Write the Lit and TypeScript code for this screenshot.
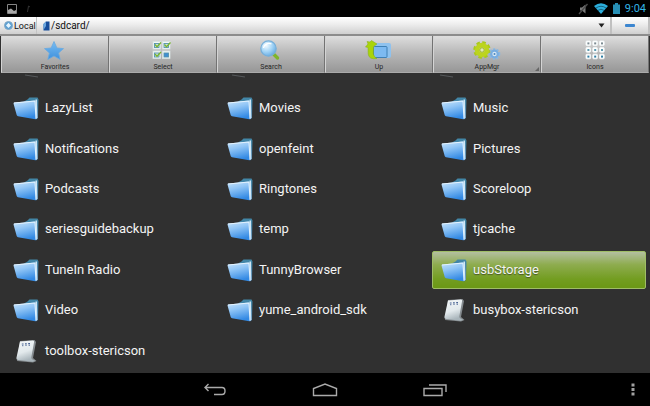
import { LitElement, html, svg, css } from "lit";
import { customElement } from "lit/decorators.js";
import { classMap } from "lit/directives/class-map.js";

interface Entry {
  name: string;
  kind: "folder" | "file";
  selected?: boolean;
}

const folder = (name: string, selected = false): Entry => ({ name, kind: "folder", selected });
const file = (name: string): Entry => ({ name, kind: "file" });

const ENTRIES: Entry[] = [
  folder("LazyList"), folder("Movies"), folder("Music"),
  folder("Notifications"), folder("openfeint"), folder("Pictures"),
  folder("Podcasts"), folder("Ringtones"), folder("Scoreloop"),
  folder("seriesguidebackup"), folder("temp"), folder("tjcache"),
  folder("TuneIn Radio"), folder("TunnyBrowser"), folder("usbStorage", true),
  folder("Video"), folder("yume_android_sdk"), file("busybox-stericson"),
  file("toolbox-stericson"),
];

const folderIcon = html`<svg class="icon" viewBox="0 0 26 26" aria-hidden="true">
  <defs>
    <linearGradient id="front" x1="0.1" y1="0" x2="0.4" y2="1">
      <stop offset="0" stop-color="#c6e3fb" /><stop offset="0.400" stop-color="#90c5f6" /><stop offset="1" stop-color="#3289e4" />
    </linearGradient>
    <linearGradient id="back" x1="0" y1="0" x2="0" y2="1">
      <stop offset="0" stop-color="#4388a8" /><stop offset="1" stop-color="#2a6596" />
    </linearGradient>
  </defs>
  <path d="M11 6.500L14.500 4.500L16.500 2.500L24.500 2.500L25.500 4.500L25 23L23 24.500Z" fill="url(#back)" />
  <path d="M22.500 4.500L24 4.500L24.500 23L22.500 24Z" fill="#cfe6f5" />
  <path d="M0.500 8.500Q0.500 7.500 1.500 7.400L21.300 5.500Q22.300 5.500 22.500 6.500L23.300 23Q23.300 24.400 22.300 24.200L5 21.200Q4 21 3.700 20Z" fill="url(#front)" />
  <path d="M1 8L22 6L23 23.800" fill="none" stroke="#e2f2fe" stroke-width="1.100" />
</svg>`;

const fileIcon = html`<svg class="icon" viewBox="0 0 26 26" aria-hidden="true">
  <defs>
    <linearGradient id="paper" x1="0" y1="0" x2="0.300" y2="1">
      <stop offset="0" stop-color="#f4f7f8" /><stop offset="0.600" stop-color="#e2e9ec" /><stop offset="1" stop-color="#a9b5bb" />
    </linearGradient>
  </defs>
  <path d="M7 3L21.500 2L23 4L20 20L23.500 23L20 24.500L4 23Z" fill="#858b8f" />
  <path d="M7 3.500L20 2.500Q21.300 2.500 21.100 4L18.300 19.500Q18.500 22 22.500 22.700L19.500 23.800L5 22Q3 21.700 3.400 20Z" fill="url(#paper)" />
  <path d="M8.800 6h1.800M12 5.800h1.800M15.200 5.600h1.800M9.300 7.700h1M12.500 7.500h1M15.700 7.300h1" stroke="#4a6494" stroke-width="1.200" />
</svg>`;

const starIcon = svg`<defs><linearGradient id="star" x1="0" y1="0" x2="0" y2="1"><stop offset="0" stop-color="#78bdf3"/><stop offset="1" stop-color="#3e90dc"/></linearGradient></defs>
  <path d="M13 1.500L15.900 8L22.500 8.600L17.600 13L19.200 19.500L13 16L6.800 19.500L8.400 13L3.500 8.600L10.100 8Z" fill="url(#star)" stroke="#6aa9e0" stroke-width="0.800" stroke-linejoin="round"/>`;

const tile = (x: number, y: number, full: boolean) => svg`
  <rect x=${x} y=${y} width="7.500" height="7.500" fill="#f2f8f6" stroke="#d8e2e2" stroke-width="0.800"/>
  <rect x=${x + 1.5} y=${y + 2} width="4.500" height="4" fill=${full ? "#3f8fd2" : "#c9dfe8"} stroke="#5693ad" stroke-width="0.900"/>
  ${full ? "" : svg`<path d="M${x + 2} ${y + 3}l2 2.200l4 -4.200" fill="none" stroke="#78b52c" stroke-width="1.300"/>`}`;

const selectIcon = svg`${tile(4, 1.5, false)}${tile(13.5, 1.5, false)}${tile(4, 11, false)}${tile(13.5, 11, true)}`;

const searchIcon = svg`<defs><radialGradient id="lens" cx="0.35" cy="0.3" r="0.8"><stop offset="0" stop-color="#f3fbff"/><stop offset="0.5" stop-color="#a5d5f6"/><stop offset="1" stop-color="#5aa3df"/></radialGradient></defs>
  <path d="M15.500 13L20.500 18" stroke="#7fb52b" stroke-width="3.400" stroke-linecap="round"/>
  <circle cx="11.500" cy="8.500" r="7.700" fill="url(#lens)" stroke="#77afd9" stroke-width="1.200"/>
  <path d="M6.500 8a5.500 5 0 0 1 8 -4" fill="none" stroke="#fff" stroke-width="1.300"/>`;

const upIcon = svg`<rect x="10" y="3" width="16" height="15" rx="2" fill="#8fc2ee"/>
  <rect x="8.500" y="6.500" width="13.500" height="11" rx="1" fill="#7dbaf1" stroke="#3678ae" stroke-width="0.900"/>
  <path d="M6.500 0.500L12 4L8.500 6.500L8.300 14Q9 17 12 18.500Q4 20 3.200 14L3 7.500L0.500 7L3 4L2 1.500L5 2Z" fill="#a9d40a" stroke="#84ad16" stroke-width="0.500"/>`;

const appIcon = svg`<circle cx="9" cy="10" r="7" fill="none" stroke="#a9c91c" stroke-width="3.500" stroke-dasharray="3.300 2.200"/>
  <circle cx="9" cy="10" r="5" fill="#d5e05a" stroke="#bcd41e" stroke-width="4.400"/>
  <circle cx="9" cy="10" r="2.200" fill="#e3e8b8" stroke="#8dab21" stroke-width="0.800"/>
  <circle cx="21.500" cy="14" r="4.600" fill="none" stroke="#8ab7e2" stroke-width="2.400" stroke-dasharray="2 1.300"/>
  <circle cx="21.500" cy="14" r="3.300" fill="#d5e7f5" stroke="#78ade0" stroke-width="2.200"/>
  <circle cx="21.500" cy="14" r="1" fill="#4e86bb"/>`;

const gridIcon = svg`${[0, 1, 2].map((r) => [0, 1, 2].map((c) => svg`
  <rect x=${5 + c * 6.8} y=${1 + r * 6.6} width="4.600" height="4.600" rx="0.800" fill="#fff" stroke="#f4fafb" stroke-width="0.800"/>
  <rect x=${6.4 + c * 6.8} y=${2.4 + r * 6.6} width="2" height="2" fill=${["#7b8b92", "#5d9bb0", "#2f7fa5"][r]}/>`))}`;

const TOOLS = [
  { label: "Favorites", icon: starIcon },
  { label: "Select", icon: selectIcon },
  { label: "Search", icon: searchIcon },
  { label: "Up", icon: upIcon },
  { label: "AppMgr", icon: appIcon, more: true },
  { label: "Icons", icon: gridIcon },
];

@customElement("app-root")
export class AppRoot extends LitElement {
  static styles = css`
    :host {
      display: flex;
      flex-direction: column;
      min-height: 100vh;
      background: #303030;
      color: #f4f4f4;
      font-family: Roboto, "Noto Sans", sans-serif;
    }
    * { box-sizing: border-box; }
    svg { display: block; flex: none; }
    button {
      margin: 0;
      padding: 0;
      border: 0;
      background: none;
      color: inherit;
      font: inherit;
    }
    .status {
      display: flex;
      align-items: center;
      gap: 5px;
      height: 17px;
      padding: 0 4px 0 6px;
      background: #000;
    }
    .notices { margin-right: auto; }
    .clock { color: #33b5e5; font-size: 11px; line-height: 16px; }
    .location {
      display: flex;
      height: 19px;
      border-bottom: 2px solid #8c8c8c;
      background: linear-gradient(#fff, #ececec 45%, #cfcfcf);
      color: #111;
    }
    .local {
      display: flex;
      align-items: center;
      gap: 1px;
      width: 37px;
      padding-left: 4px;
      border-right: 1px solid #c4c4c4;
      font-size: 9px;
    }
    .path {
      display: flex;
      flex: 1;
      align-items: center;
      gap: 1px;
      min-width: 0;
      padding: 0 5px 0 6px;
    }
    .path input {
      flex: 1;
      min-width: 0;
      padding: 0;
      border: 0;
      background: none;
      color: #111;
      font: 10px/16px Roboto, sans-serif;
    }
    .collapse {
      display: grid;
      place-items: center;
      width: 40px;
      border: solid #c0c0c0;
      border-width: 0 2px;
    }
    .tools {
      display: grid;
      grid-template-columns: repeat(6, 1fr);
      height: 37px;
      padding: 0 1px;
      flex: none;
    }
    .tool {
      position: relative;
      display: flex;
      flex-direction: column;
      align-items: center;
      justify-content: space-between;
      padding-top: 4px;
      border-right: 1px solid #737373;
      border-left: 1px solid #d4d4d4;
      border-bottom: 1px solid #aaa;
      background: linear-gradient(#dedede, #b9b9b9 45%, #979797);
      color: #252525;
      font-size: 7px;
      line-height: 9px;
    }
    .tool svg { width: 28px; height: 21px; }
    .corner {
      position: absolute;
      right: 1px;
      bottom: 1px;
      border: 2px solid #666;
      border-top-color: transparent;
      border-left-color: transparent;
    }
    main {
      display: flex;
      flex: 1;
      flex-direction: column;
      padding: 0 4px 2px;
    }
    .previous, .entries {
      display: grid;
      grid-template-columns: repeat(3, 1fr);
    }
    .previous {
      align-items: end;
      height: 15px;
      padding: 0 10px 10px;
      overflow: hidden;
    }
    .previous svg { width: 26px; height: 4px; }
    .entries { flex: 1; grid-auto-rows: 1fr; }
    .entry {
      display: flex;
      align-items: center;
      gap: 6px;
      margin: 1px 0;
      padding-left: 8px;
      border: 1px solid transparent;
      border-radius: 2px;
      font-size: 13px;
      line-height: 16px;
      text-align: left;
    }
    .entry.selected {
      border-color: #9fbd66;
      background: linear-gradient(#b3bfa0, #8eac4f 35%, #739d21 75%, #6b9815);
      text-shadow: 0 1px 1px #465525;
    }
    .icon { width: 26px; height: 26px; }
    nav {
      display: flex;
      align-items: center;
      height: 33px;
      background: #000;
    }
    .keys {
      display: flex;
      flex: 1;
      justify-content: center;
      gap: 85px;
      padding-left: 35px;
    }
    .menu { width: 35px; display: grid; place-items: center; }
  `;

  render() {
    return html`
      <header class="status">
        <svg class="notices" width="26" height="12" viewBox="0 0 26 12" aria-hidden="true">
          <path d="M1.500 1.500h9v9h-9z" fill="none" stroke="#858585" />
          <path d="M2 10V7l3 -1.500l3 2.500l2 -1v3z" fill="#a9a9a9" />
          <path d="M21.500 9l1 -6l1.500 1" fill="none" stroke="#333" />
        </svg>
        <svg width="11" height="12" viewBox="0 0 11 12" aria-hidden="true">
          <path d="M2 4.500h2l3.500 -3v9l-3.500 -3h-2z" fill="#7b7b7b" />
          <path d="M1 11L9.500 1" stroke="#4b4b4b" stroke-width="1.300" />
        </svg>
        <svg width="14" height="11" viewBox="0 0 14 11" aria-label="Wi-Fi">
          <path d="M0 3Q7 -2.500 14 3L7 11Z" fill="#2caedc" />
          <path d="M2 5Q7 1.500 12 5M4 7.400Q7 5 10 7.400" fill="none" stroke="#0a4458" stroke-width="0.700" />
        </svg>
        <svg width="7" height="11" viewBox="0 0 7 11" aria-label="Battery">
          <path d="M2 0h3v1.500h2v9.500h-7v-9.500h2z" fill="#278fb5" />
        </svg>
        <span class="clock">9:04</span>
      </header>

      <div class="location">
        <button class="local">
          <svg width="9" height="9" viewBox="0 0 9 9" aria-hidden="true">
            <circle cx="4.500" cy="4.500" r="4" fill="#5a9fd3" stroke="#82a9c5" />
            <path d="M4.500 1.800L7 4.500L4.500 7L2 4.500Z" fill="#e6f6ff" />
          </svg>Local
        </button>
        <div class="path">
          <svg width="7" height="10" viewBox="0 0 7 10" aria-hidden="true">
            <path d="M0.500 3L3 0.500H6.500V9.500H0.500Z" fill="#174d9a" />
            <path d="M0.500 3L3 0.500V5L0.500 9Z" fill="#69a7df" />
          </svg>
          <input aria-label="Path" value="/sdcard/" />
          <button aria-label="Path history">
            <svg width="7" height="5" viewBox="0 0 7 5"><path d="M0.500 0.500h6L3.500 4.500z" fill="#222" /></svg>
          </button>
        </div>
        <button class="collapse" aria-label="Collapse">
          <svg width="10" height="3" viewBox="0 0 10 3"><rect width="10" height="3" rx="1" fill="#3c86d0" /></svg>
        </button>
      </div>

      <div class="tools">
        ${TOOLS.map((t) => html`<button class="tool">
          <svg viewBox="0 0 28 21" aria-hidden="true">${t.icon}</svg>
          <span>${t.label}</span>
          ${t.more ? html`<i class="corner"></i>` : ""}
        </button>`)}
      </div>

      <main>
        <div class="previous" aria-hidden="true">
          ${[0, 1, 2].map(() => html`<svg viewBox="0 0 26 4">
            <path d="M11 1L24 3" stroke="#55585a" stroke-width="1.200" />
          </svg>`)}
        </div>
        <div class="entries">
          ${ENTRIES.map((e) => html`<button class=${classMap({ entry: true, selected: !!e.selected })}>
            ${e.kind === "folder" ? folderIcon : fileIcon}<span>${e.name}</span>
          </button>`)}
        </div>
      </main>

      <nav>
        <div class="keys">
          <button aria-label="Back">
            <svg width="24" height="14" viewBox="0 0 24 14" fill="none" stroke="#aaa" stroke-width="1.400">
              <path d="M5.500 1L2 4.500L5.500 8M2 4.500H19Q22 4.500 22 8Q22 11.500 19 11.500H11" />
            </svg>
          </button>
          <button aria-label="Home">
            <svg width="26" height="14" viewBox="0 0 26 14" fill="none" stroke="#aaa" stroke-width="1.400">
              <path d="M1.500 12.500V5.500L13 1L24.500 5.500V12.500Z" />
            </svg>
          </button>
          <button aria-label="Recent apps">
            <svg width="24" height="14" viewBox="0 0 24 14" fill="none" stroke="#aaa" stroke-width="1.400">
              <path d="M1 5.500H19V12.500H1ZM6 2H23V9" />
            </svg>
          </button>
        </div>
        <button class="menu" aria-label="Menu">
          <svg width="4" height="13" viewBox="0 0 4 13" fill="#a0a0a0">
            <rect x="0.500" y="0.500" width="3" height="3" /><rect x="0.500" y="5" width="3" height="3" /><rect x="0.500" y="9.500" width="3" height="3" />
          </svg>
        </button>
      </nav>
    `;
  }
}
